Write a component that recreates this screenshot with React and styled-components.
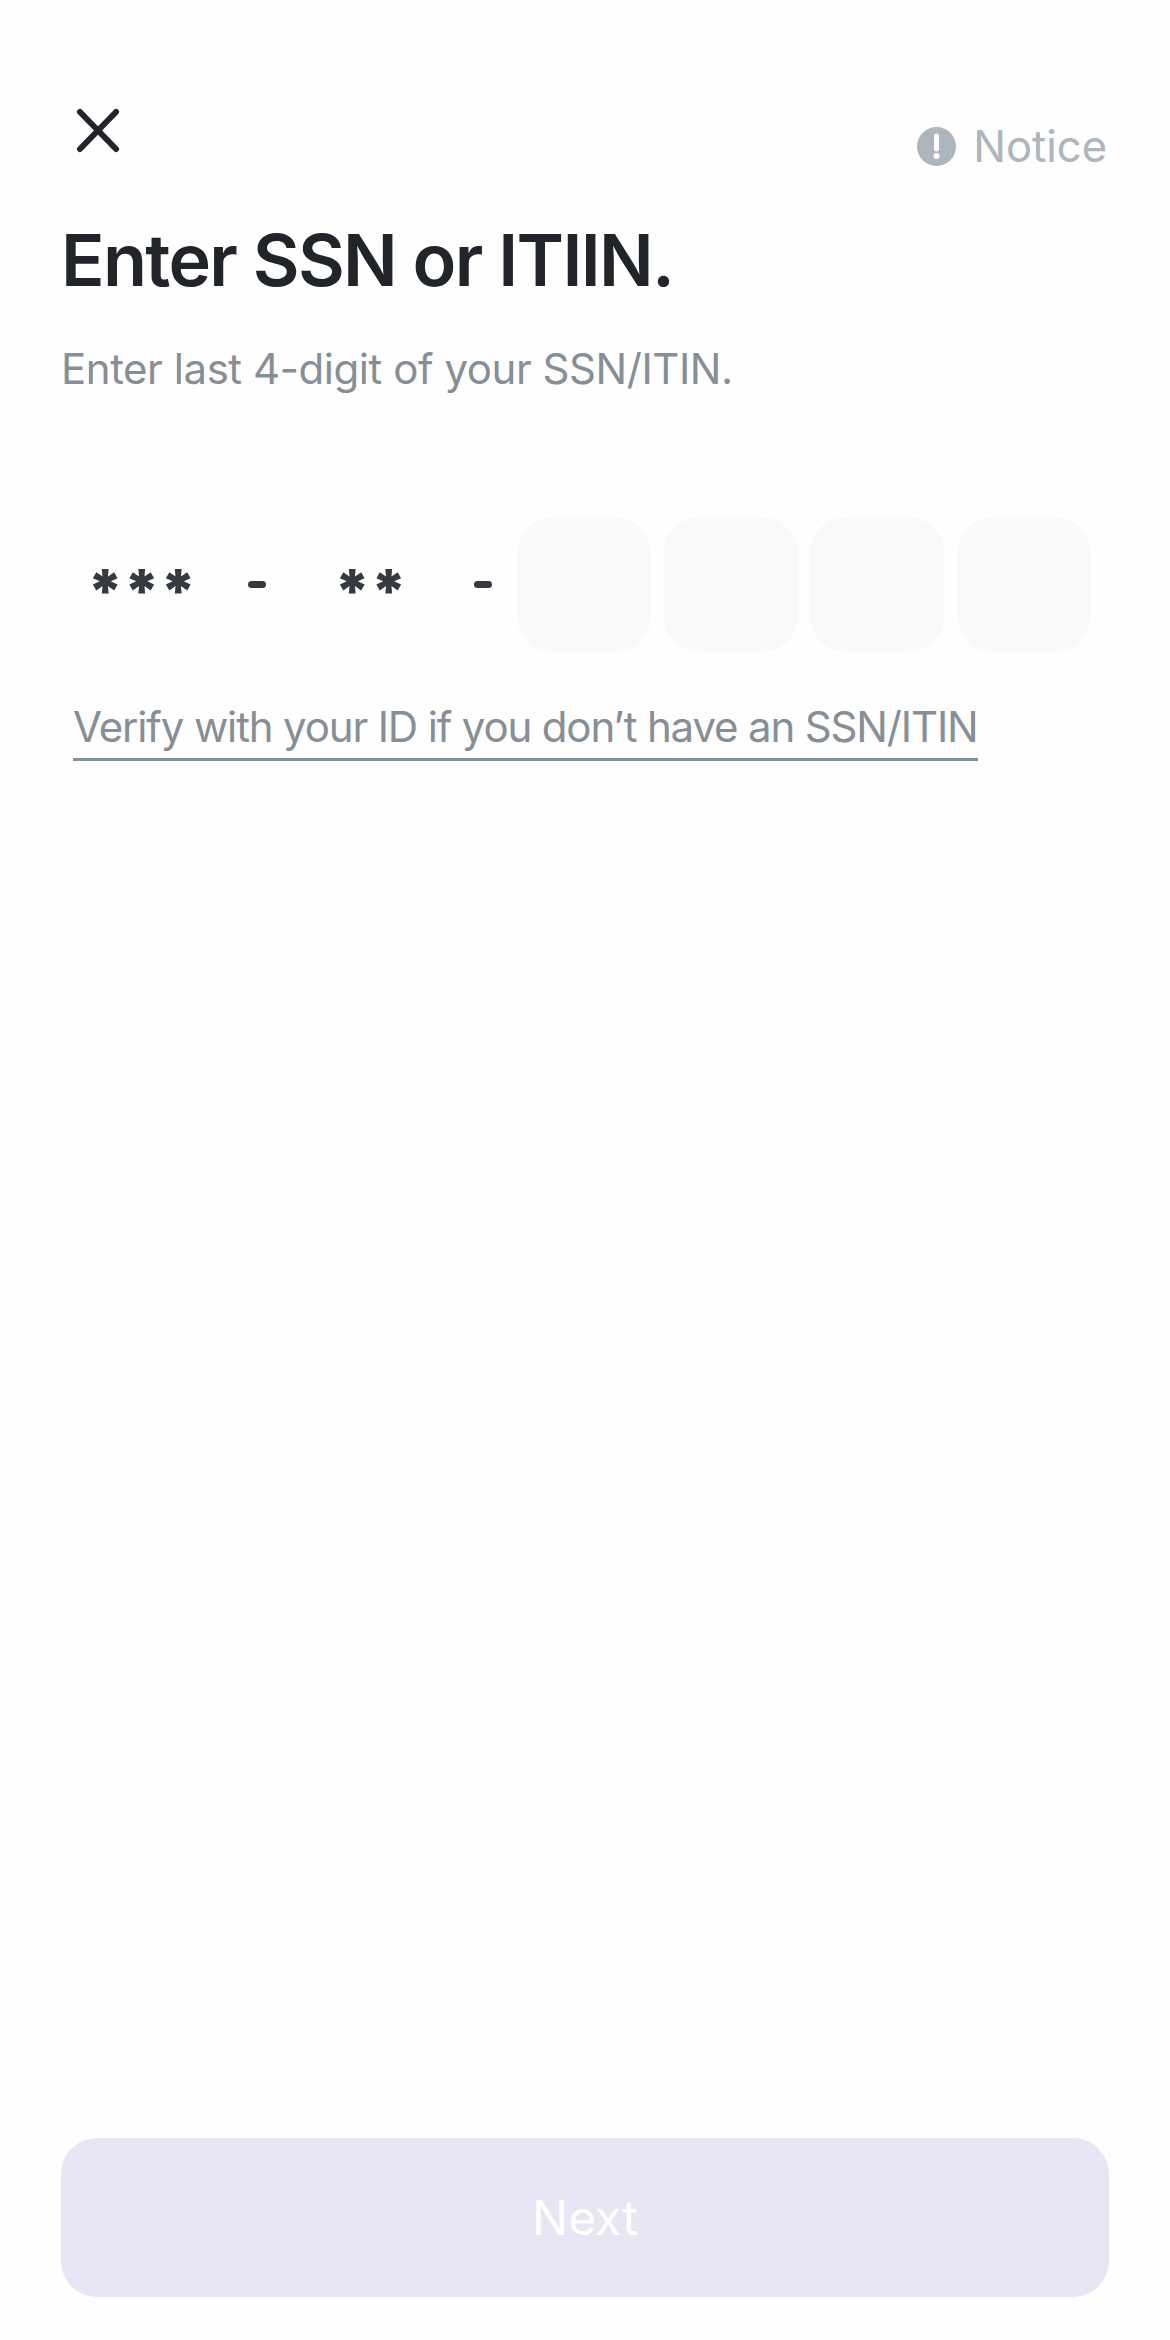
import React from "react";
import styled, { createGlobalStyle } from "styled-components";

const GlobalStyle = createGlobalStyle`
  html, body {
    margin: 0;
    padding: 0;
    background: #fefefe;
  }
  * {
    box-sizing: border-box;
  }
`;

const Page = styled.div`
  display: flex;
  flex-direction: column;
  width: 1170px;
  height: 2340px;
  padding: 0 61px 43px;
  background: #fefefe;
  font-family: Inter, "Liberation Sans", sans-serif;
`;

const Header = styled.header`
  display: flex;
  justify-content: space-between;
  align-items: flex-start;
  height: 215px;
  padding-top: 100px;
`;

const CloseButton = styled.button`
  display: flex;
  width: 60px;
  height: 60px;
  margin-left: 7px;
  padding: 0;
  border: none;
  background: none;
`;

const Notice = styled.div`
  display: flex;
  align-items: center;
  gap: 17px;
  height: 46px;
  margin: 23px 2px 0 0;
  font-size: 43.5px;
  line-height: 46px;
  color: #adb5bd;
`;

const Title = styled.h1`
  margin: 0;
  font-size: 72px;
  line-height: 90px;
  font-weight: 600;
  letter-spacing: -1.65px;
  color: #212529;
`;

const Subtitle = styled.p`
  margin: 39px 0 0;
  font-size: 42px;
  line-height: 50px;
  letter-spacing: -0.45px;
  color: #868e96;
`;

const CodeRow = styled.div`
  display: flex;
  align-items: center;
  height: 135px;
  margin-top: 123px;
`;

const Masked = styled.span`
  width: ${(p) => p.$width}px;
  margin-left: ${(p) => p.$left}px;
  padding-top: 14px;
  font-size: 60px;
  line-height: 121px;
  font-weight: 900;
  color: #343a40;
  white-space: nowrap;
`;

const Dash = styled.span`
  width: 18px;
  height: 7px;
  margin-left: ${(p) => p.$left}px;
  border-radius: 4px;
  background: #343a40;
`;

const Digits = styled.div`
  display: flex;
  gap: 12.7px;
  margin-left: 25px;
`;

const DigitBox = styled.div`
  width: 134px;
  height: 135px;
  border-radius: 36px;
  background: #f8f9fa;
`;

const VerifyLink = styled.a`
  align-self: flex-start;
  margin: 46px 0 0 12px;
  padding-bottom: 2px;
  border-bottom: 3px solid #868e96;
  font-size: 42px;
  line-height: 58px;
  letter-spacing: -1.15px;
  color: #868e96;
`;

const NextButton = styled.button`
  width: 1048px;
  height: 159px;
  margin-top: auto;
  border: none;
  border-radius: 36px;
  background: #e9e5f5;
  font-family: inherit;
  font-size: 48px;
  color: #ffffff;
`;

const CloseIcon = () => (
  <svg width="60" height="60" viewBox="0 0 60 60" fill="none">
    <path
      d="M12 12 L48 49 M48 12 L12 49"
      stroke="#212529"
      strokeWidth="6"
      strokeLinecap="round"
    />
  </svg>
);

const NoticeIcon = () => (
  <svg width="39" height="39" viewBox="0 0 39 39">
    <circle cx="19.5" cy="19.5" r="19.5" fill="#adb5bd" />
    <path d="M19.5 9 V22" stroke="#fefefe" strokeWidth="5" strokeLinecap="round" />
    <circle cx="19.5" cy="29" r="3" fill="#fefefe" />
  </svg>
);

export default function App() {
  return (
    <>
      <GlobalStyle />
      <Page>
        <Header>
          <CloseButton aria-label="Close">
            <CloseIcon />
          </CloseButton>
          <Notice>
            <NoticeIcon />
            Notice
          </Notice>
        </Header>
        <Title>Enter SSN or ITIIN.</Title>
        <Subtitle>Enter last 4-digit of your SSN/ITIN.</Subtitle>
        <CodeRow>
          <Masked $left={26} $width={110}>***</Masked>
          <Dash $left={51} />
          <Masked $left={68} $width={70}>**</Masked>
          <Dash $left={70} />
          <Digits>
            <DigitBox />
            <DigitBox />
            <DigitBox />
            <DigitBox />
          </Digits>
        </CodeRow>
        <VerifyLink>Verify with your ID if you don’t have an SSN/ITIN</VerifyLink>
        <NextButton>Next</NextButton>
      </Page>
    </>
  );
}
